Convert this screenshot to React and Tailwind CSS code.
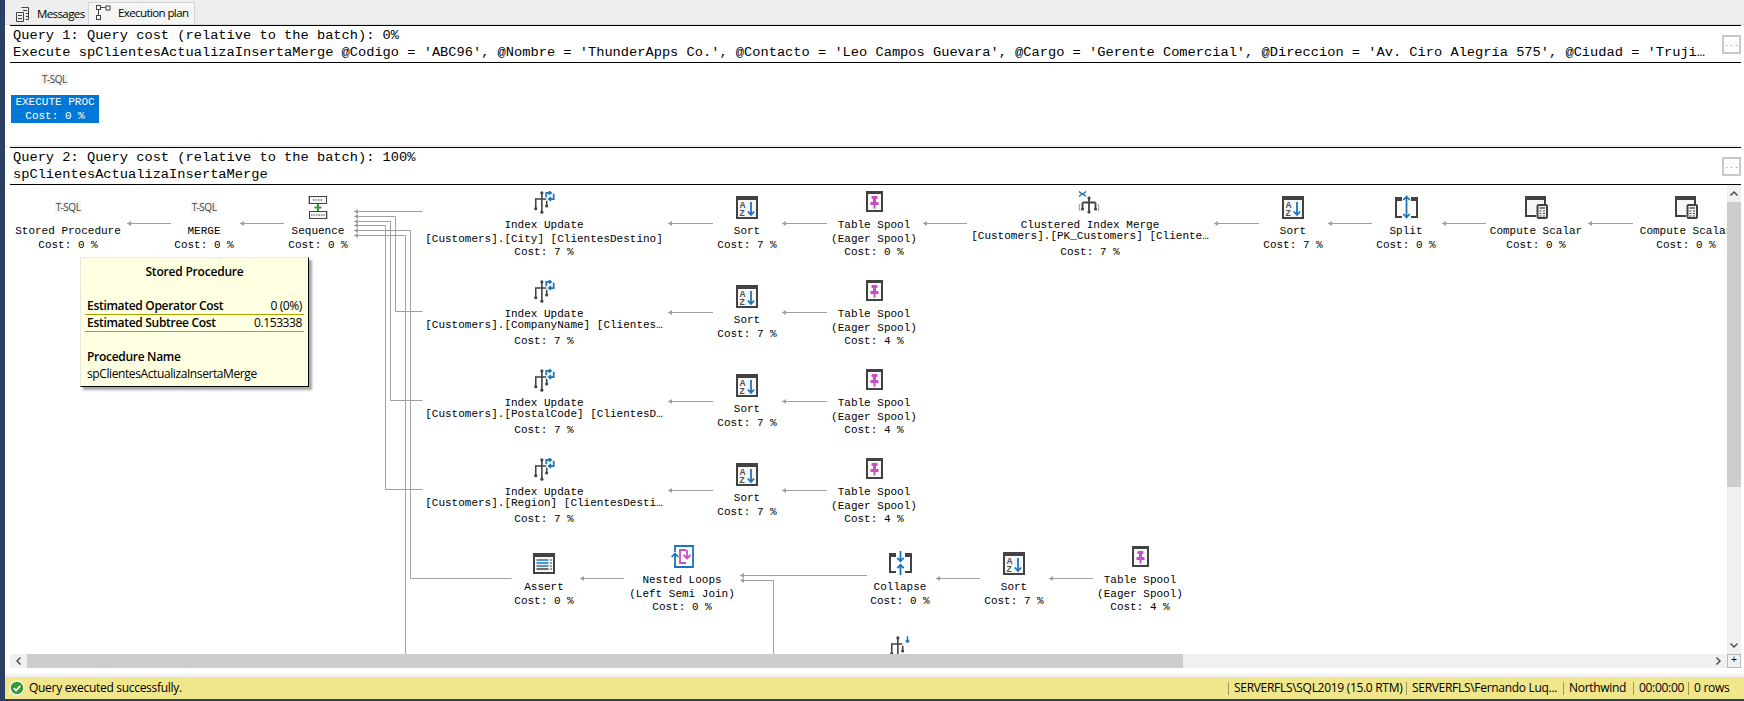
import React from 'react';

// page coordinates of the lower plan's origin
const CX = 10;
const CY = 185;

const SortIcon = () => (
  <svg width="22" height="23" viewBox="0 0 22 23">
    <rect x="1" y="1" width="20" height="21" fill="#f6f6f6" stroke="#424242" strokeWidth="2" />
    <rect x="1" y="1" width="20" height="3" fill="#424242" />
    <text x="3.500" y="12" fontSize="8.500" fontWeight="700" fontFamily="Liberation Sans, sans-serif" fill="#505050">A</text>
    <text x="3.500" y="20" fontSize="8.500" fontWeight="700" fontFamily="Liberation Sans, sans-serif" fill="#505050">Z</text>
    <path d="M15 6v13M11.800 15.500l3.200 3.500 3.200-3.500" fill="none" stroke="#1b75bc" strokeWidth="1.800" />
  </svg>
);

const SpoolIcon = () => (
  <svg width="17" height="21" viewBox="0 0 17 21">
    <path d="M1 1h15v19H1z" fill="#f6f6f6" stroke="#424242" strokeWidth="2" />
    <rect x="1" y="1" width="15" height="2" fill="#424242" />
    <rect x="5.500" y="5" width="6" height="3" rx="1" fill="#c94fc0" />
    <rect x="7" y="8" width="3" height="3" fill="#c94fc0" />
    <rect x="4.500" y="11" width="8" height="3" fill="#c94fc0" />
    <rect x="7.500" y="14" width="2" height="3.500" fill="#c94fc0" />
  </svg>
);

const IndexUpdateIcon = ({ arrows = 'swap' }) => (
  <svg width="21" height="23" viewBox="0 0 24 26">
    <path d="M2 19V9h7M9 2v22M9 9h5M14.500 11v6" fill="none" stroke="#424242" strokeWidth="1.800" />
    <circle cx="2" cy="20" r="1.800" fill="#424242" />
    <circle cx="9" cy="2" r="1.800" fill="#424242" />
    <circle cx="9" cy="24" r="1.800" fill="#424242" />
    <circle cx="14.500" cy="17" r="1.800" fill="#424242" />
    {arrows === 'swap' ? (
      <path d="M14 7V2h5M17 0l2.500 2-2.500 2M22.500 3v6h-5M19.500 11l-2.500-2 2.500-2" fill="none" stroke="#1b75bc" strokeWidth="2" />
    ) : (
      <path d="M20 0v7M18 5l2 2 2-2" fill="none" stroke="#1b75bc" strokeWidth="1.800" />
    )}
  </svg>
);

const ClusteredMergeIcon = () => (
  <svg width="24" height="23" viewBox="0 0 24 23">
    <path d="M1 0.500l3 2.500-3 2.500M8 0.500L5 3l3 2.500" fill="none" stroke="#1b75bc" strokeWidth="1.500" />
    <path d="M11 7v14M4.500 11.500h13M4.500 11.500v6M17.500 11.500v6" fill="none" stroke="#424242" strokeWidth="1.800" />
    <circle cx="11" cy="7" r="1.600" fill="#424242" />
    <circle cx="11" cy="21" r="1.600" fill="#424242" />
    <circle cx="4.500" cy="18" r="1.600" fill="#424242" />
    <circle cx="17.500" cy="18" r="1.600" fill="#424242" />
    <path d="M2 13q-2 3.500 0 7M20 13q2 3.500 0 7" fill="none" stroke="#8a8a8a" strokeWidth="1" />
  </svg>
);

const SplitIcon = () => (
  <svg width="23" height="24" viewBox="0 0 23 24">
    <path d="M7 22H1V2M16 22h6V2" fill="none" stroke="#424242" strokeWidth="2" />
    <rect x="0" y="2" width="7" height="4" fill="#424242" />
    <rect x="16" y="2" width="7" height="4" fill="#424242" />
    <path d="M11.500 1.500v21M8.300 5L11.500 1.500 14.700 5M8.300 19l3.200 3.500 3.200-3.500" fill="none" stroke="#1b75bc" strokeWidth="1.800" />
  </svg>
);

const CollapseIcon = () => (
  <svg width="23" height="24" viewBox="0 0 23 24">
    <path d="M7 21H1V2M16 21h6V2" fill="none" stroke="#424242" strokeWidth="2" />
    <rect x="0" y="2" width="7" height="4" fill="#424242" />
    <rect x="16" y="2" width="7" height="4" fill="#424242" />
    <path d="M11.500 0v10M8.300 6.800l3.200 3.400 3.200-3.400M11.500 24V14M8.300 17.200l3.200-3.400 3.200 3.400" fill="none" stroke="#1b75bc" strokeWidth="1.800" />
  </svg>
);

const ComputeIcon = () => (
  <svg width="23" height="23" viewBox="0 0 23 23">
    <path d="M1 20V2h19v9" fill="#f6f6f6" stroke="#424242" strokeWidth="2" />
    <path d="M0 20h11" stroke="#424242" strokeWidth="2" />
    <rect x="0" y="0" width="21" height="4" fill="#424242" />
    <rect x="12.500" y="9" width="9.500" height="13" rx="1" fill="#f6f6f6" stroke="#424242" strokeWidth="2" />
    <path d="M14.500 12h5.500" stroke="#424242" strokeWidth="1.300" />
    <path d="M14.500 15h2M18 15h2M14.500 17.500h2M18 17.500h2M14.500 20h2M18 20h2" stroke="#424242" strokeWidth="1.200" />
  </svg>
);

const SequenceIcon = () => (
  <svg width="20" height="25" viewBox="0 0 20 25">
    <rect x="1.500" y="1.500" width="17" height="7" fill="#f6f6f6" stroke="#424242" />
    <rect x="1.500" y="16.500" width="17" height="7" fill="#f6f6f6" stroke="#424242" />
    <path d="M5 5h10M3 20h14" stroke="#424242" strokeDasharray="1.500 1" />
    <path d="M10 9v7M6.500 12.500h7" stroke="#339933" strokeWidth="2" />
    <path d="M1 1v8M19 16v8" stroke="#424242" strokeWidth="0.600" />
  </svg>
);

const AssertIcon = () => (
  <svg width="22" height="21" viewBox="0 0 22 21">
    <rect x="1" y="1" width="20" height="19" fill="#f6f6f6" stroke="#424242" strokeWidth="2" />
    <rect x="1" y="1" width="20" height="3" fill="#424242" />
    <path d="M3.500 7h12M3.500 10h12M3.500 13h12" stroke="#1b75bc" strokeWidth="1.500" />
    <path d="M3.500 16h12" stroke="#424242" strokeWidth="1.500" />
    <path d="M17 7h2M17 10h2M17 13h2M17 16h2" stroke="#424242" strokeWidth="1.200" />
  </svg>
);

const NestedLoopsIcon = () => (
  <svg width="23" height="23" viewBox="0 0 23 23">
    <path d="M4 7V1h18v21H4v-3" fill="#ffffff" stroke="#1b75bc" strokeWidth="1.800" />
    <path d="M15 5H9v13h6" fill="none" stroke="#c94fc0" strokeWidth="1.800" />
    <path d="M16 5v8M12.500 10l3.500 3.500 3.500-3.500" fill="none" stroke="#c94fc0" strokeWidth="1.800" />
    <path d="M4 22V9M0.700 12L4 8.500 7.300 12" fill="none" stroke="#1b75bc" strokeWidth="1.800" />
  </svg>
);

const TsqlIcon = () => (
  <span className="bg-[#f4f4f4] px-px text-[10px] leading-[12px] text-[#444444] [font-family:'Open_Sans',sans-serif] tracking-[-0.5px]">T-SQL</span>
);

const nodes = [
  { x: 68, y: 207, ty: 231, icon: <TsqlIcon />, lines: ['Stored Procedure', 'Cost: 0 %'] },
  { x: 204, y: 207, ty: 231, icon: <TsqlIcon />, lines: ['MERGE', 'Cost: 0 %'] },
  { x: 318, y: 207, ty: 231, icon: <SequenceIcon />, lines: ['Sequence', 'Cost: 0 %'] },

  { x: 544, y: 202, ty: 225, icon: <IndexUpdateIcon />, lines: ['Index Update', '[Customers].[City] [ClientesDestino]', 'Cost: 7 %'] },
  { x: 747, y: 207, ty: 231, icon: <SortIcon />, lines: ['Sort', 'Cost: 7 %'] },
  { x: 874, y: 201, ty: 225, icon: <SpoolIcon />, lines: ['Table Spool', '(Eager Spool)', 'Cost: 0 %'] },
  { x: 1090, y: 202, ty: 225, icon: <ClusteredMergeIcon />, lines: ['Clustered Index Merge', '[Customers].[PK_Customers] [Cliente…', 'Cost: 7 %'] },
  { x: 1293, y: 207, ty: 231, icon: <SortIcon />, lines: ['Sort', 'Cost: 7 %'] },
  { x: 1406, y: 207, ty: 231, icon: <SplitIcon />, lines: ['Split', 'Cost: 0 %'] },
  { x: 1536, y: 207, ty: 231, icon: <ComputeIcon />, lines: ['Compute Scalar', 'Cost: 0 %'] },
  { x: 1686, y: 207, ty: 231, icon: <ComputeIcon />, lines: ['Compute Scalar', 'Cost: 0 %'] },

  { x: 544, y: 291, ty: 314, icon: <IndexUpdateIcon />, lines: ['Index Update', '[Customers].[CompanyName] [Clientes…', 'Cost: 7 %'] },
  { x: 747, y: 296, ty: 320, icon: <SortIcon />, lines: ['Sort', 'Cost: 7 %'] },
  { x: 874, y: 290, ty: 314, icon: <SpoolIcon />, lines: ['Table Spool', '(Eager Spool)', 'Cost: 4 %'] },

  { x: 544, y: 380, ty: 403, icon: <IndexUpdateIcon />, lines: ['Index Update', '[Customers].[PostalCode] [ClientesD…', 'Cost: 7 %'] },
  { x: 747, y: 385, ty: 409, icon: <SortIcon />, lines: ['Sort', 'Cost: 7 %'] },
  { x: 874, y: 379, ty: 403, icon: <SpoolIcon />, lines: ['Table Spool', '(Eager Spool)', 'Cost: 4 %'] },

  { x: 544, y: 469, ty: 492, icon: <IndexUpdateIcon />, lines: ['Index Update', '[Customers].[Region] [ClientesDesti…', 'Cost: 7 %'] },
  { x: 747, y: 474, ty: 498, icon: <SortIcon />, lines: ['Sort', 'Cost: 7 %'] },
  { x: 874, y: 468, ty: 492, icon: <SpoolIcon />, lines: ['Table Spool', '(Eager Spool)', 'Cost: 4 %'] },

  { x: 544, y: 563, ty: 587, icon: <AssertIcon />, lines: ['Assert', 'Cost: 0 %'] },
  { x: 682, y: 556, ty: 580, icon: <NestedLoopsIcon />, lines: ['Nested Loops', '(Left Semi Join)', 'Cost: 0 %'] },
  { x: 900, y: 563, ty: 587, icon: <CollapseIcon />, lines: ['Collapse', 'Cost: 0 %'] },
  { x: 1014, y: 563, ty: 587, icon: <SortIcon />, lines: ['Sort', 'Cost: 7 %'] },
  { x: 1140, y: 556, ty: 580, icon: <SpoolIcon />, lines: ['Table Spool', '(Eager Spool)', 'Cost: 4 %'] },

  { x: 900, y: 647, icon: <IndexUpdateIcon arrows="down" /> },
];

// [from, to, y] runs between two operators, head at the left end
const arrows = [
  [127, 171, 223], [240, 284, 223],
  [668, 713, 223], [782, 827, 223], [923, 967, 223],
  [1214, 1259, 223], [1328, 1372, 223], [1442, 1486, 223], [1588, 1633, 223],
  [668, 713, 312], [782, 827, 312],
  [668, 713, 401], [782, 827, 401],
  [668, 713, 490], [782, 827, 490],
  [580, 624, 578], [740, 867, 575],
  [936, 980, 578], [1049, 1093, 578],
];

// polylines ending in an arrow head at their last point
const elbows = [
  '422,211 354,211',
  '422,311 395,311 395,216 354,216',
  '422,400 390,400 390,221 354,221',
  '422,489 385,489 385,225 354,225',
  '511,578 410,578 410,230 354,230',
  '405,660 405,235 354,235',
  '773,660 773,580 740,580',
];

const Head = ({ x, y }) => (
  <path d={`M${x} ${y}l4-2.500v5z`} fill="#a0a0a0" />
);

const Connections = () => (
  <svg className="absolute left-0 top-0 pointer-events-none" width="1720" height="470" viewBox={`${CX} ${CY} 1720 470`}>
    {arrows.map(([a, b, y]) => (
      <g key={`${a}-${y}`}>
        <path d={`M${a} ${y + 0.5}H${b}`} stroke="#a0a0a0" fill="none" />
        <Head x={a} y={y + 0.5} />
      </g>
    ))}
    {elbows.map((pts) => {
      const p = pts.split(' ').map((s) => s.split(',').map(Number));
      const last = p[p.length - 1];
      return (
        <g key={pts}>
          <polyline points={p.map(([x, y]) => `${x + 0.5},${y + 0.5}`).join(' ')} stroke="#a0a0a0" fill="none" />
          <Head x={last[0]} y={last[1] + 0.5} />
        </g>
      );
    })}
  </svg>
);

// the label's second line sits tighter when it was truncated
const lineClass = (lines, i) => {
  if (i === 1 && lines[1].endsWith('…')) return 'mt-[-3px]';
  if (i === 2 && lines[1].endsWith('…')) return 'mt-[2px]';
  if (i === 2) return 'mt-[-1px]';
  return '';
};

const Node = ({ x, y, ty, icon, lines }) => (
  <>
    <div className="absolute flex items-center justify-center w-0 h-0" style={{ left: x - CX, top: y - CY }}>
      <div className="shrink-0 flex">{icon}</div>
    </div>
    {lines && (
      <div className="absolute w-0 flex flex-col items-center" style={{ left: x - CX, top: ty - 7 - CY }}>
        {lines.map((l, i) => (
          <div key={l} className={`h-[14px] leading-[14px] whitespace-pre text-[11px] text-black ${lineClass(lines, i)}`}>{l}</div>
        ))}
      </div>
    )}
  </>
);

const Tooltip = () => (
  <div className="absolute left-[70px] top-[72px] w-[229px] h-[130px] bg-[#ffffe1] border-l border-t border-[#e8e8d8] border-r border-b border-r-black border-b-black shadow-[3px_3px_2px_#a8a8a8] [font-family:'Open_Sans',sans-serif] text-[12px] text-black leading-[16px] tracking-[-0.4px]">
    <div className="text-center font-semibold mt-[6px] tracking-[-0.2px]">Stored Procedure</div>
    <div className="mt-[18px] mx-[4px] border-b border-[#a7a300] h-[17px] flex justify-between px-[2px]">
      <span className="font-semibold tracking-[-0.3px]">Estimated Operator Cost</span>
      <span>0 (0%)</span>
    </div>
    <div className="mx-[4px] border-b border-[#a7a300] h-[17px] flex justify-between px-[2px]">
      <span className="font-semibold tracking-[-0.3px]">Estimated Subtree Cost</span>
      <span>0.153338</span>
    </div>
    <div className="mt-[17px] mx-[6px] font-semibold tracking-[-0.3px]">Procedure Name</div>
    <div className="mt-[1px] mx-[6px]">spClientesActualizaInsertaMerge</div>
  </div>
);

const QueryHeader = ({ first, second }) => (
  <div className="flex border-t border-b border-black h-[38px] mr-[3px] ml-[5px] shrink-0">
    <div className="flex-1 min-w-0 pl-[3px] pt-[1px] text-[13.7px] leading-[17px] text-black">
      <div className="whitespace-pre">{first}</div>
      <div className="whitespace-pre overflow-hidden">{second}</div>
    </div>
    <div className="w-[19px] h-[19px] mt-[9px] border-2 border-[#c8c8c8] bg-[#fdfdfd] text-[8px] leading-[14px] text-center text-[#888888] shrink-0">...</div>
  </div>
);

const TabIconMessages = () => (
  <svg width="15" height="16" viewBox="0 0 15 16" fill="none" stroke="#424242">
    <path d="M1.500 6.500h7v9h-7z" />
    <path d="M3 9.500h4M3 12.500h4" />
    <path d="M6.500 1.500h7v12h-3" />
    <path d="M8 4.500h4M11 7.500h2M11 10.500h2" />
  </svg>
);

const TabIconPlan = () => (
  <svg width="15" height="15" viewBox="0 0 15 15" fill="none" stroke="#424242">
    <rect x="0.500" y="0.500" width="4" height="4" />
    <rect x="10" y="1" width="4" height="4" />
    <rect x="0.500" y="10.500" width="4" height="4" />
    <path d="M4.500 2.500h5M2.500 4.500v6" />
  </svg>
);

const Sep = () => <span className="w-px h-[13px] bg-[#9c9660]" />;

export default function App() {
  return (
    <div className="h-[701px] w-[1744px] overflow-hidden flex bg-white [font-family:'Liberation_Mono',monospace] border-b-2 border-[#2b3f63]">
      <div className="w-[5px] bg-[#2b3f63] shrink-0" />
      <div className="flex-1 min-w-0 flex flex-col">
        {/* tab strip */}
        <div className="h-[25px] bg-[#eeeeee] flex items-end pl-[4px] shrink-0 border-b border-[#dcdcdc] [font-family:'Open_Sans',sans-serif] text-[11.5px] text-black tracking-[-0.6px] whitespace-nowrap">
          <div className="h-[21px] w-[79px] flex items-center gap-[7px] pl-[6px]">
            <TabIconMessages />
            <span>Messages</span>
          </div>
          <div className="h-[22px] w-[107px] flex items-center gap-[7px] pl-[7px] pb-[2px] bg-[#f5f5f5] border border-b-0 border-[#d4d4d4]">
            <TabIconPlan />
            <span>Execution plan</span>
          </div>
        </div>

        <QueryHeader
          first="Query 1: Query cost (relative to the batch): 0%"
          second="Execute spClientesActualizaInsertaMerge @Codigo = 'ABC96', @Nombre = 'ThunderApps Co.', @Contacto = 'Leo Campos Guevara', @Cargo = 'Gerente Comercial', @Direccion = 'Av. Ciro Alegría 575', @Ciudad = 'Truji…"
        />

        {/* plan of query 1 */}
        <div className="h-[84px] shrink-0 relative border-b-2 border-[#f0f0f0] mr-[3px]">
          <div className="absolute left-[6px] top-[32px] w-[88px] h-[28px] bg-[#0078d7] text-white text-[11px] leading-[14px] text-center">
            <div>EXECUTE PROC</div>
            <div>Cost: 0 %</div>
          </div>
          <div className="absolute left-[36px] top-[10px] flex"><TsqlIcon /></div>
        </div>

        <QueryHeader first="Query 2: Query cost (relative to the batch): 100%" second="spClientesActualizaInsertaMerge" />

        {/* plan of query 2 */}
        <div className="flex-1 min-h-0 flex pl-[5px] pr-[3px]">
          <div className="flex-1 min-w-0 relative overflow-hidden">
            <Connections />
            {nodes.map((n, i) => <Node key={i} {...n} />)}
            <Tooltip />
          </div>
          <div className="w-[14px] shrink-0 flex flex-col bg-[#f0f0f0]">
            <svg className="shrink-0" width="14" height="17" viewBox="0 0 14 17" fill="none" stroke="#505050" strokeWidth="1.500"><path d="M3.500 10.500L7 7l3.500 3.500" /></svg>
            <div className="h-[285px] bg-[#cdcdcd]" />
            <div className="flex-1" />
            <svg className="shrink-0" width="14" height="17" viewBox="0 0 14 17" fill="none" stroke="#505050" strokeWidth="1.500"><path d="M3.500 6.500L7 10l3.500-3.500" /></svg>
          </div>
        </div>

        {/* horizontal scrollbar */}
        <div className="h-[14px] shrink-0 flex items-stretch pl-[5px] pr-[3px]">
          <div className="flex-1 flex bg-[#f0f0f0]">
            <svg className="shrink-0" width="17" height="14" viewBox="0 0 17 14" fill="none" stroke="#505050" strokeWidth="1.500"><path d="M10.500 3.500L7 7l3.500 3.500" /></svg>
            <div className="w-[1156px] bg-[#cdcdcd]" />
            <div className="flex-1" />
            <svg className="shrink-0" width="17" height="14" viewBox="0 0 17 14" fill="none" stroke="#505050" strokeWidth="1.500"><path d="M6.500 3.500L10 7l-3.500 3.500" /></svg>
          </div>
          <div className="w-[14px] bg-[#f0f0f0] border border-[#b8b8b8] text-[10px] leading-[12px] text-center text-black shrink-0">+</div>
        </div>

        <div className="h-[9px] shrink-0 bg-white border-b-[3px] border-[#efefef]" />

        {/* status bar */}
        <div className="h-[22px] shrink-0 bg-[#f0e68c] flex items-center pl-[4px] pr-[5px] [font-family:'Open_Sans',sans-serif] text-[12px] text-black tracking-[-0.3px]">
          <svg width="16" height="16" viewBox="0 0 16 16">
            <circle cx="8" cy="8" r="7.500" fill="#ffffff" />
            <circle cx="8" cy="8" r="6.200" fill="#339933" />
            <path d="M4.800 8.200l2.300 2.300 4.200-4.600" fill="none" stroke="#ffffff" strokeWidth="1.800" />
          </svg>
          <span className="ml-[4px]">Query executed successfully.</span>
          <div className="flex-1" />
          <div className="flex items-center whitespace-pre">
            <Sep />
            <span className="w-[177px] pl-[5px]">SERVERFLS\SQL2019 (15.0 RTM)</span>
            <Sep />
            <span className="w-[156px] pl-[5px]">SERVERFLS\Fernando Luq...</span>
            <Sep />
            <span className="w-[69px] pl-[5px]">Northwind</span>
            <Sep />
            <span className="w-[54px] pl-[5px]">00:00:00</span>
            <Sep />
            <span className="w-[50px] pl-[5px]">0 rows</span>
          </div>
        </div>
      </div>
    </div>
  );
}
